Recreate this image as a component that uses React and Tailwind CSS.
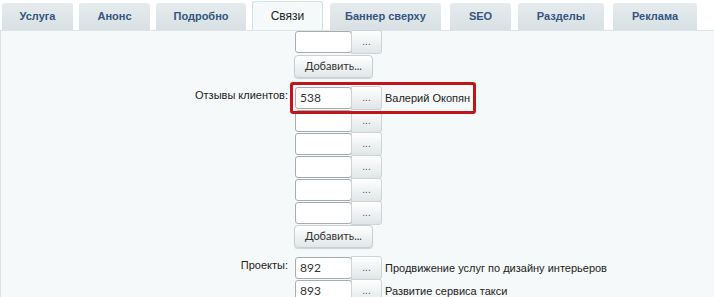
const tabs = [
  { label: 'Услуга', w: 'w-[71px]', ml: 'ml-[2px]' },
  { label: 'Анонс', w: 'w-[71px]', ml: 'ml-[6px]' },
  { label: 'Подробно', w: 'w-[90px]', ml: 'ml-[6px]' },
  { label: 'Связи', w: 'w-[71px]', ml: 'ml-[6px]', active: true },
  { label: 'Баннер сверху', w: 'w-[111px]', ml: 'ml-[7px]' },
  { label: 'SEO', w: 'w-[61px]', ml: 'ml-[9px]' },
  { label: 'Разделы', w: 'w-[86px]', ml: 'ml-[7px]' },
  { label: 'Реклама', w: 'w-[84px]', ml: 'ml-[9px]' },
];

function Tab({ label, w, ml, active }) {
  if (active) {
    return (
      <div
        className={`${w} ${ml} h-[29px] mt-[1px] -mb-px relative z-10 flex items-center justify-center rounded-t-[3px] border border-b-0 border-[#d5dee1] bg-[#f5f9f9] text-[12px] text-[#222]`}
      >
        {label}
      </div>
    );
  }
  return (
    <div
      className={`${w} ${ml} h-[27px] mt-[3px] flex items-center justify-center rounded-t-[3px] bg-gradient-to-b from-[#e6ecee] to-[#d8e0e3] text-[11px] font-bold text-[#34557f]`}
    >
      {label}
    </div>
  );
}

function Field({ value, title }) {
  return (
    <div className="h-[23px] flex items-start">
      <div className="w-[57px] h-[22px] rounded-[3px] border border-[#a6adb0] bg-white pl-[4px] text-[12px] leading-[20px] text-[#333] font-['Lato',sans-serif]">
        {value}
      </div>
      <div className="w-[31px] h-[24px] -mt-px -ml-px rounded-r-[3px] border border-[#cdd4d7] bg-gradient-to-b from-[#ffffff] to-[#e0e6e8] flex items-center justify-center text-[10px] text-[#555] pb-[1px]">
        ...
      </div>
      {title && (
        <span className="ml-[3px] text-[11px] leading-[22px] text-[#222]">{title}</span>
      )}
    </div>
  );
}

function AddButton() {
  return (
    <div className="w-[79px] h-[23px] rounded-[4px] border border-[#c7cfd2] bg-gradient-to-b from-[#ffffff] to-[#e1e7e9] shadow-[0_1px_1px_rgba(0,0,0,0.15)] flex items-center justify-center text-[11px] text-[#333] font-['Lato',sans-serif] -ml-px">
      Добавить...
    </div>
  );
}

function Section({ label, children, className = '' }) {
  return (
    <div className={`flex ${className}`}>
      <div className="w-[287px] text-right text-[11px] leading-[14px] pt-[1px] text-[#222]">
        {label}
      </div>
      <div className="ml-[7px] flex flex-col relative">{children}</div>
    </div>
  );
}

export default function App() {
  return (
    <div className="w-[714px] h-[297px] overflow-hidden bg-white font-['Liberation_Sans',Arial,sans-serif]">
      <div className="flex items-start h-[30px]">
        {tabs.map((t) => (
          <Tab key={t.label} {...t} />
        ))}
      </div>
      <div className="h-[267px] bg-[#f5f9f9] border-l border-t border-[#dde4e6]">
        <Section label="">
          <Field value="" />
          <div className="mt-px">
            <AddButton />
          </div>
        </Section>

        <Section label="Отзывы клиентов:" className="mt-[9px]">
          <div className="absolute -left-[5px] -top-[5px] w-[186px] h-[32px] rounded-[3px] border-[3px] border-[#c2141b] pointer-events-none z-10" />
          <Field value="538" title="Валерий Окопян" />
          <Field value="" />
          <Field value="" />
          <Field value="" />
          <Field value="" />
          <Field value="" />
          <AddButton />
        </Section>

        <Section label="Проекты:" className="mt-[9px]">
          <Field value="892" title="Продвижение услуг по дизайну интерьеров" />
          <Field value="893" title="Развитие сервиса такси" />
        </Section>
      </div>
    </div>
  );
}
